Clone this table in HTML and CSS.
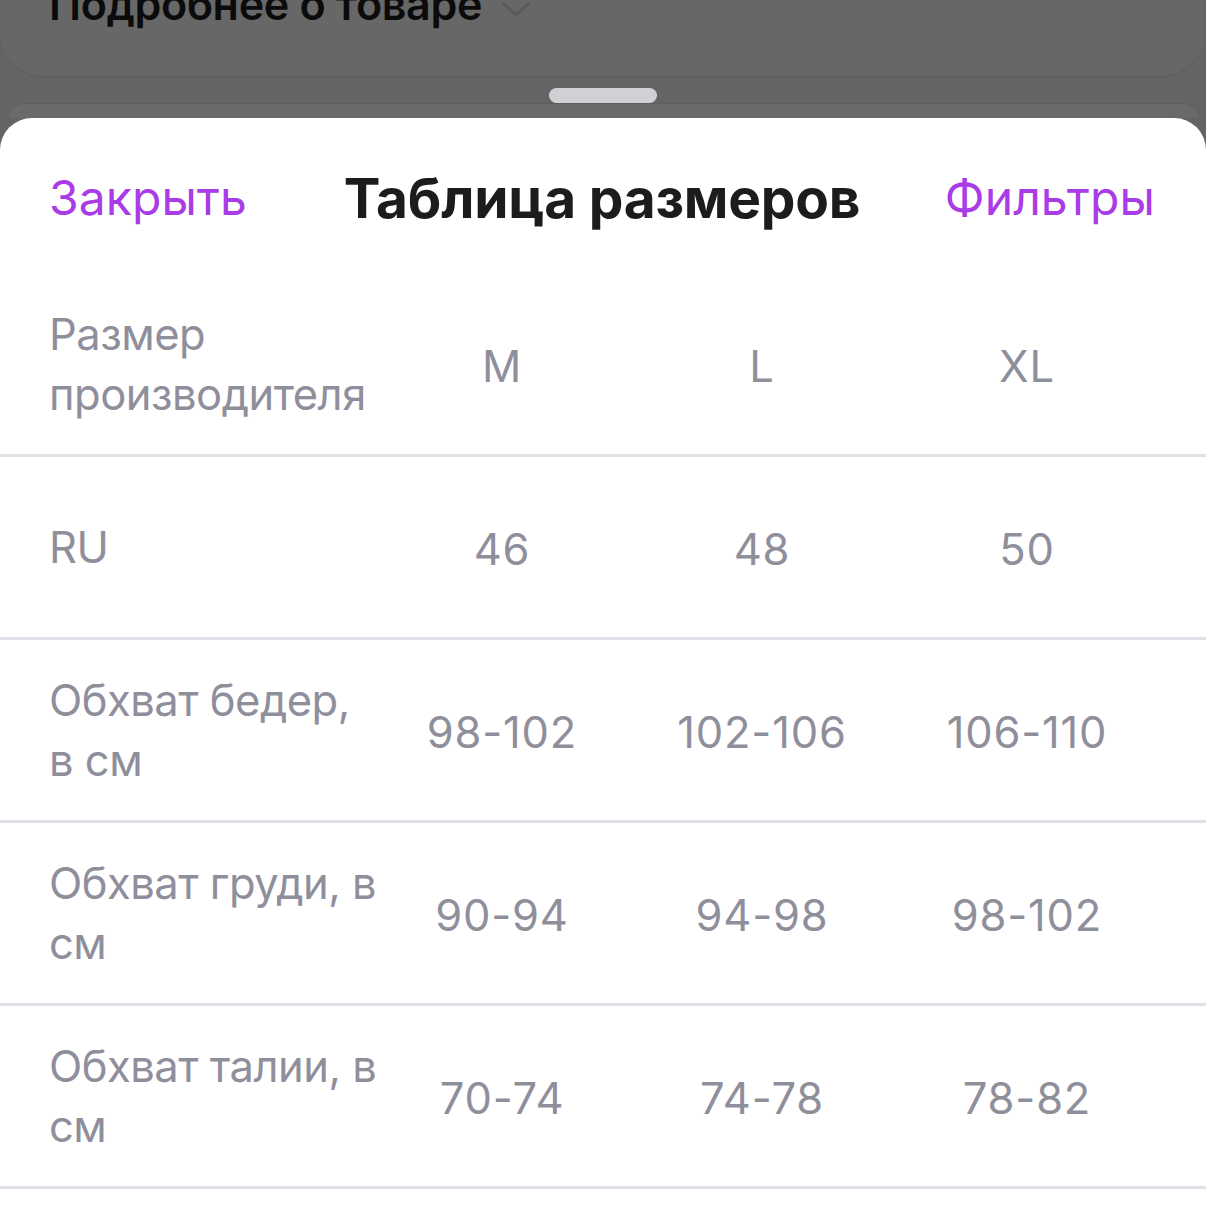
FILE: index.html
```html
<!DOCTYPE html>
<html lang="ru">
<head>
<meta charset="utf-8">
<title>Таблица размеров</title>
<link rel="stylesheet" href="styles.css">
</head>
<body>
<div class="screen">
  <div class="backdrop">
    <div class="product-card">
      <span class="more">Подробнее о товаре</span>
      <svg class="chev" width="28" height="16" viewBox="0 0 28 16" fill="none"><path d="M2 2 L14 13 L26 2" stroke="#595959" stroke-width="3" stroke-linecap="round" stroke-linejoin="round"/></svg>
    </div>
    <div class="band">
      <div class="handle"></div>
      <div class="back-card"></div>
    </div>
  </div>
  <div class="sheet">
    <header class="sheet-head">
      <span class="link left">Закрыть</span>
      <h1 class="title">Таблица размеров</h1>
      <span class="link right">Фильтры</span>
    </header>
    <div class="size-table">
      <div class="row">
        <div class="label">Размер производителя</div>
        <div class="val">M</div><div class="val">L</div><div class="val">XL</div>
      </div>
      <div class="row">
        <div class="label">RU</div>
        <div class="val">46</div><div class="val">48</div><div class="val">50</div>
      </div>
      <div class="row">
        <div class="label">Обхват бедер, в см</div>
        <div class="val">98-102</div><div class="val">102-106</div><div class="val">106-110</div>
      </div>
      <div class="row">
        <div class="label">Обхват груди, в см</div>
        <div class="val">90-94</div><div class="val">94-98</div><div class="val">98-102</div>
      </div>
      <div class="row">
        <div class="label">Обхват талии, в см</div>
        <div class="val">70-74</div><div class="val">74-78</div><div class="val">78-82</div>
      </div>
    </div>
  </div>
</div>
</body>
</html>
```
FILE: styles.css
```css
html, body {
  margin: 0;
  padding: 0;
}
body {
  background: #646464;
  font-family: "Inter", "Roboto", "Liberation Sans", sans-serif;
  width: 1206px;
  height: 1222px;
  overflow: hidden;
}
.screen {
  display: flex;
  flex-direction: column;
  height: 1222px;
}
.backdrop {
  display: flex;
  flex-direction: column;
  background: #646464;
}
.product-card {
  height: 138px;
  margin-top: -60px;
  margin-right: 2px;
  background: #676767;
  border-radius: 0 0 44px 44px;
  border-bottom: 2px solid #606060;
  box-sizing: border-box;
  display: flex;
  align-items: flex-start;
  padding: 44px 0 0 49px;
  gap: 20px;
}
.more {
  font-size: 43px;
  font-weight: 600;
  color: #0b0b0b;
  line-height: 40px;
  letter-spacing: -0.3px;
}
.chev {
  margin-top: 18px;
}
.band {
  display: flex;
  flex-direction: column;
  align-items: center;
  padding-top: 10px;
}
.handle {
  width: 108px;
  height: 15px;
  border-radius: 8px;
  background: #d1d1d5;
}
.back-card {
  align-self: stretch;
  height: 15px;
  margin: 0 8px;
  background: #6a6a6a;
  border-radius: 30px 30px 0 0;
  border-top: 1px solid #5e5e5e;
  box-sizing: border-box;
}
.sheet {
  background: #ffffff;
  border-radius: 32px 32px 0 0;
  flex: 1;
}
.sheet-head {
  display: grid;
  grid-template-columns: 1fr auto 1fr;
  align-items: center;
  padding: 52px 51px 48px 49px;
}
.link {
  font-size: 48px;
  line-height: 56px;
  color: #a93ce6;
  font-weight: 400;
  letter-spacing: 0.1px;
}
.link.right {
  justify-self: end;
}
.title {
  margin: 0;
  font-size: 55px;
  line-height: 56px;
  font-weight: 700;
  color: #1c1c1e;
  letter-spacing: -0.2px;
  text-align: center;
}
.size-table {
  display: flex;
  flex-direction: column;
}
.row {
  display: grid;
  grid-template-columns: 336px 234px 286px 244px;
  align-items: center;
  height: 180px;
  padding-left: 49px;
  border-bottom: 3px solid #e0e0e6;
  color: #8f8f9c;
  font-size: 43.5px;
}
.label {
  line-height: 60px;
  padding-right: 6px;
  letter-spacing: -0.5px;
}
.val {
  text-align: center;
  line-height: 60px;
  padding-top: 4px;
  letter-spacing: 0.8px;
}
```
